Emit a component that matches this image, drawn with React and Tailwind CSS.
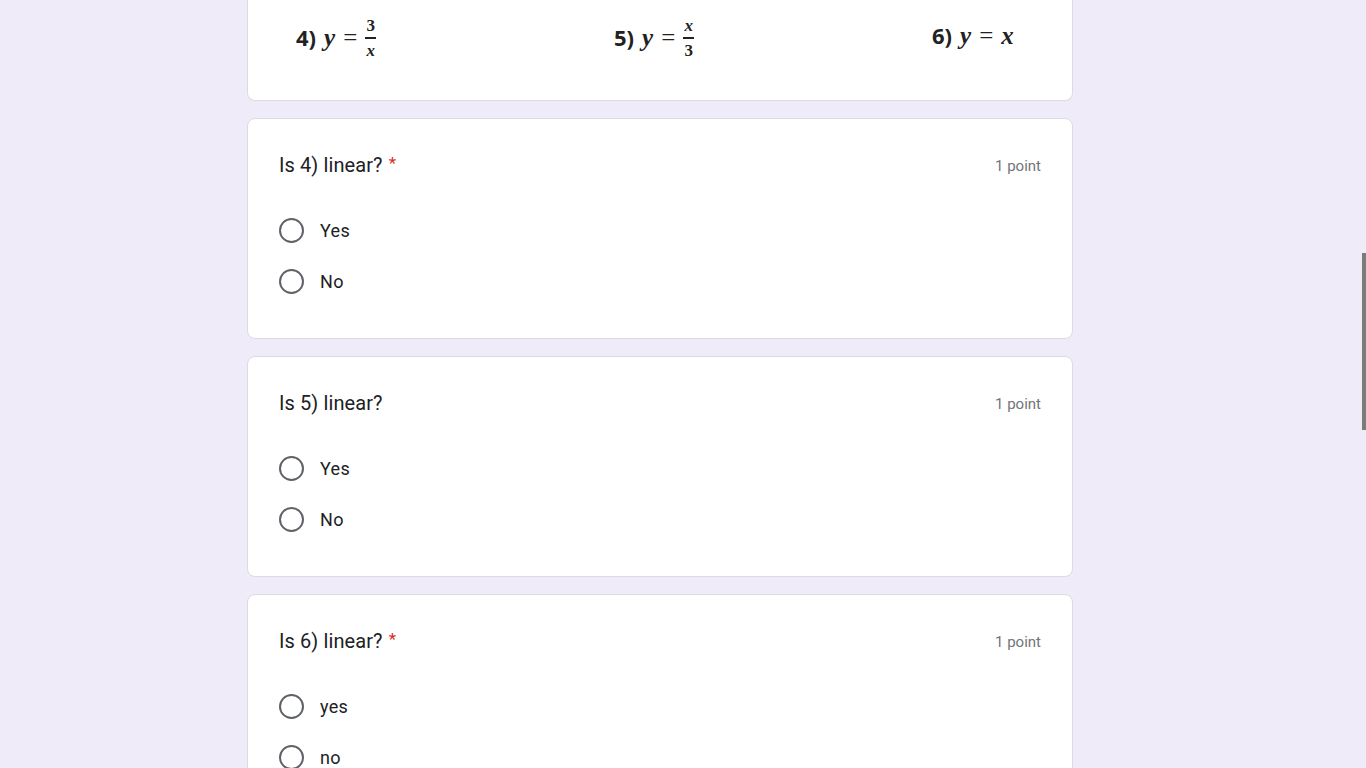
import React from "react";

const questions = [
  { title: "Is 4) linear?", required: true, options: ["Yes", "No"] },
  { title: "Is 5) linear?", required: false, options: ["Yes", "No"] },
  { title: "Is 6) linear?", required: true, options: ["yes", "no"] },
];

function Fraction({ top, bottom, italicTop, italicBottom }) {
  return (
    <span className="inline-flex flex-col items-center align-middle leading-none text-[17px] font-bold">
      <span className={italicTop ? "italic" : ""}>{top}</span>
      <span className="w-[11px] h-[1.5px] bg-[#222] my-[3px]" />
      <span className={italicBottom ? "italic" : ""}>{bottom}</span>
    </span>
  );
}

function Equation({ n, children }) {
  return (
    <div className="flex items-center text-[#222] gap-[8px]">
      <span className="font-['Open_Sans',sans-serif] font-bold text-[22px]">{n})</span>
      <span className="font-['Liberation_Serif',serif] italic font-bold text-[25px]">y</span>
      <span className="font-['Liberation_Serif',serif] text-[25px]">=</span>
      <span className="font-['Liberation_Serif',serif] flex items-center">{children}</span>
    </div>
  );
}

function Radio() {
  return <span className="w-[25px] h-[25px] rounded-full border-2 border-[#5f6368] shrink-0" />;
}

function QuestionCard({ q }) {
  return (
    <div className="bg-white border border-[#dadce0] rounded-[8px] px-[31px] pt-[23px] pb-[31px]">
      <div className="flex justify-between items-center h-[46px]">
        <div className="text-[20px] text-[#202124] font-['Roboto',sans-serif] tracking-[0.1px]">
          {q.title}
          {q.required && (
            <span className="text-[#d93025] text-[17px] ml-[6px] relative top-[-3px]">*</span>
          )}
        </div>
        <div className="text-[15px] text-[#70757a] font-['Roboto',sans-serif] pt-[2px]">1 point</div>
      </div>
      <div className="mt-[17px]">
        {q.options.map((o) => (
          <div key={o} className="flex items-center h-[51px] gap-4">
            <Radio />
            <span className="text-[18px] text-[#202124] font-['Roboto',sans-serif] tracking-[0.3px]">
              {o}
            </span>
          </div>
        ))}
      </div>
    </div>
  );
}

export default function App() {
  return (
    <div className="h-screen overflow-hidden bg-[#f0ebf8] relative">
      <div className="w-[826px] ml-[247px] flex flex-col gap-[17px]">
        <div className="bg-white border border-[#dadce0] border-t-0 rounded-b-[8px] h-[101px] pl-[48px] flex items-start pt-[17px]">
          <div className="w-[318px]">
            <Equation n="4">
              <Fraction top="3" bottom="x" italicBottom />
            </Equation>
          </div>
          <div className="w-[318px]">
            <Equation n="5">
              <Fraction top="x" bottom="3" italicTop />
            </Equation>
          </div>
          <div>
            <Equation n="6">
              <span className="italic font-bold text-[25px]">x</span>
            </Equation>
          </div>
        </div>
        {questions.map((q) => (
          <QuestionCard key={q.title} q={q} />
        ))}
      </div>
      <div className="fixed right-0 top-[253px] w-[4px] h-[177px] bg-[#7b7b7b]" />
    </div>
  );
}
